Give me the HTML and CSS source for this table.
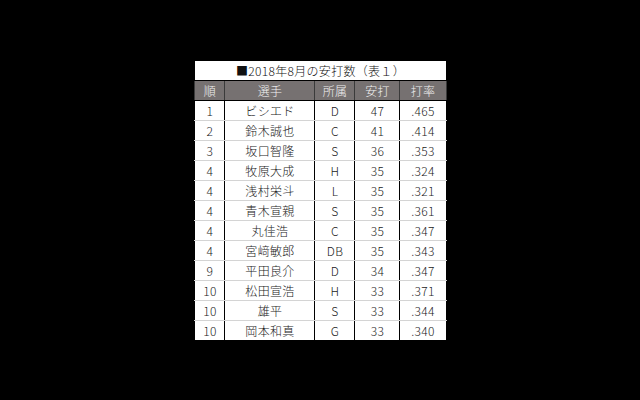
FILE: index.html
```html
<!DOCTYPE html>
<html lang="ja">
<head>
<meta charset="utf-8">
<link rel="stylesheet" href="styles.css">
</head>
<body>
<div class="page">
<table class="stats">
  <colgroup>
    <col class="c1"><col class="c2"><col class="c3"><col class="c4"><col class="c5">
  </colgroup>
  <thead>
    <tr class="title"><th colspan="5">■2018年8月の安打数（表１）</th></tr>
    <tr class="head"><th>順</th><th>選手</th><th>所属</th><th>安打</th><th>打率</th></tr>
  </thead>
  <tbody>
    <tr><td>1</td><td>ビシエド</td><td>D</td><td>47</td><td>.465</td></tr>
    <tr><td>2</td><td>鈴木誠也</td><td>C</td><td>41</td><td>.414</td></tr>
    <tr><td>3</td><td>坂口智隆</td><td>S</td><td>36</td><td>.353</td></tr>
    <tr><td>4</td><td>牧原大成</td><td>H</td><td>35</td><td>.324</td></tr>
    <tr><td>4</td><td>浅村栄斗</td><td>L</td><td>35</td><td>.321</td></tr>
    <tr><td>4</td><td>青木宣親</td><td>S</td><td>35</td><td>.361</td></tr>
    <tr><td>4</td><td>丸佳浩</td><td>C</td><td>35</td><td>.347</td></tr>
    <tr><td>4</td><td>宮﨑敏郎</td><td>DB</td><td>35</td><td>.343</td></tr>
    <tr><td>9</td><td>平田良介</td><td>D</td><td>34</td><td>.347</td></tr>
    <tr><td>10</td><td>松田宣浩</td><td>H</td><td>33</td><td>.371</td></tr>
    <tr><td>10</td><td>雄平</td><td>S</td><td>33</td><td>.344</td></tr>
    <tr><td>10</td><td>岡本和真</td><td>G</td><td>33</td><td>.340</td></tr>
  </tbody>
</table>
</div>
</body>
</html>
```
FILE: styles.css
```css
html, body {
  margin: 0;
  padding: 0;
  background: #000;
}
.page {
  width: 640px;
  height: 400px;
  display: flex;
  justify-content: center;
  padding-top: 60px;
  box-sizing: border-box;
  padding-left: 1px;
}
.stats {
  border-collapse: collapse;
  table-layout: fixed;
  width: 251px;
  height: 280px;
  align-self: flex-start;
  font-family: "Noto Sans CJK JP", "Liberation Sans", sans-serif;
  font-size: 12px;
  font-weight: 300;
  color: #1a1a1a;
}
.c1 { width: 30px; }
.c2 { width: 90px; }
.c3 { width: 40px; }
.c4 { width: 45px; }
.c5 { width: 46px; }
.stats th, .stats td {
  padding: 0;
  text-align: center;
  line-height: 19px;
  height: 19px;
  font-weight: 300;
  letter-spacing: 0.3px;
}
.title th {
  background: #fff;
  color: #111;
  font-size: 12px;
  border: 1px solid #000;
}
.head th {
  background: #767171;
  color: #f2f2f2;
  border-left: 1px solid #3a3a3a;
  border-right: 1px solid #3a3a3a;
  border-bottom: 1px solid #000;
}
.stats td {
  background: #fff;
  border-left: 1px solid #000;
  border-right: 1px solid #000;
  border-bottom: 1px solid #d4d4d4;
}
.stats tbody tr:last-child td {
  border-bottom: 1px solid #000;
}
```
